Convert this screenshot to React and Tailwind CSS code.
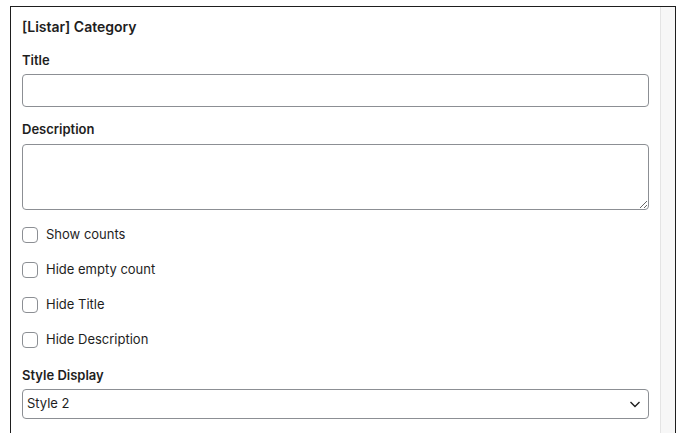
import React from "react";

const options = ["Show counts", "Hide empty count", "Hide Title", "Hide Description"];

function Checkbox({ label }) {
  return (
    <label className="flex items-center h-[18px] gap-[8px] text-[13px] text-[#1e1e1e]">
      <input
        type="checkbox"
        className="appearance-none w-[16px] h-[16px] border border-[#8c8f94] rounded-[4px] bg-white m-0"
      />
      <span>{label}</span>
    </label>
  );
}

export default function App() {
  return (
    <div
      className="h-[433px] overflow-hidden bg-white pl-[10px] pr-[4px] pt-[6px]"
      style={{ fontFamily: "Inter, 'Noto Sans', sans-serif" }}
    >
      <div className="flex h-full border border-b-0 border-[#1e1e1e]">
        <div className="flex-1 flex flex-col px-[11px] pt-[10px]">
          <h2 className="text-[14px] leading-[20px] font-semibold text-[#1e1e1e]">[Listar] Category</h2>

          <label className="mt-[14px] text-[13px] leading-[18px] font-semibold text-[#1e1e1e]">Title</label>
          <input
            type="text"
            className="mt-[5px] h-[33px] w-full border border-[#8c8f94] rounded-[4px] px-2 text-[13px] outline-none"
          />

          <label className="mt-[13px] text-[13px] leading-[18px] font-semibold text-[#1e1e1e]">Description</label>
          <textarea
            className="mt-[6px] h-[66px] w-full border border-[#8c8f94] rounded-[4px] px-2 py-1 text-[13px] outline-none block"
          />

          <div className="mt-[16px] flex flex-col gap-[17px]">
            {options.map((o) => (
              <Checkbox key={o} label={o} />
            ))}
          </div>

          <label className="mt-[17px] text-[13px] leading-[18px] font-semibold text-[#1e1e1e]">Style Display</label>
          <div className="relative mt-[5px]">
            <select
              defaultValue="2"
              className="appearance-none h-[30px] w-full border border-[#8c8f94] rounded-[4px] pl-[4px] pr-8 text-[13px] text-[#1e1e1e] bg-white outline-none"
            >
              <option value="1">Style 1</option>
              <option value="2">Style 2</option>
            </select>
            <svg
              className="absolute right-[8px] top-[10px] pointer-events-none"
              width="12"
              height="10"
              viewBox="0 0 12 10"
              fill="none"
            >
              <path d="M1.5 3l4.5 4.5L10.5 3" stroke="#1e1e1e" strokeWidth="1.4" />
            </svg>
          </div>
        </div>
        <div className="w-[15px] bg-[#f7f7f7] border-l border-[#e4e4e4]" />
      </div>
    </div>
  );
}
